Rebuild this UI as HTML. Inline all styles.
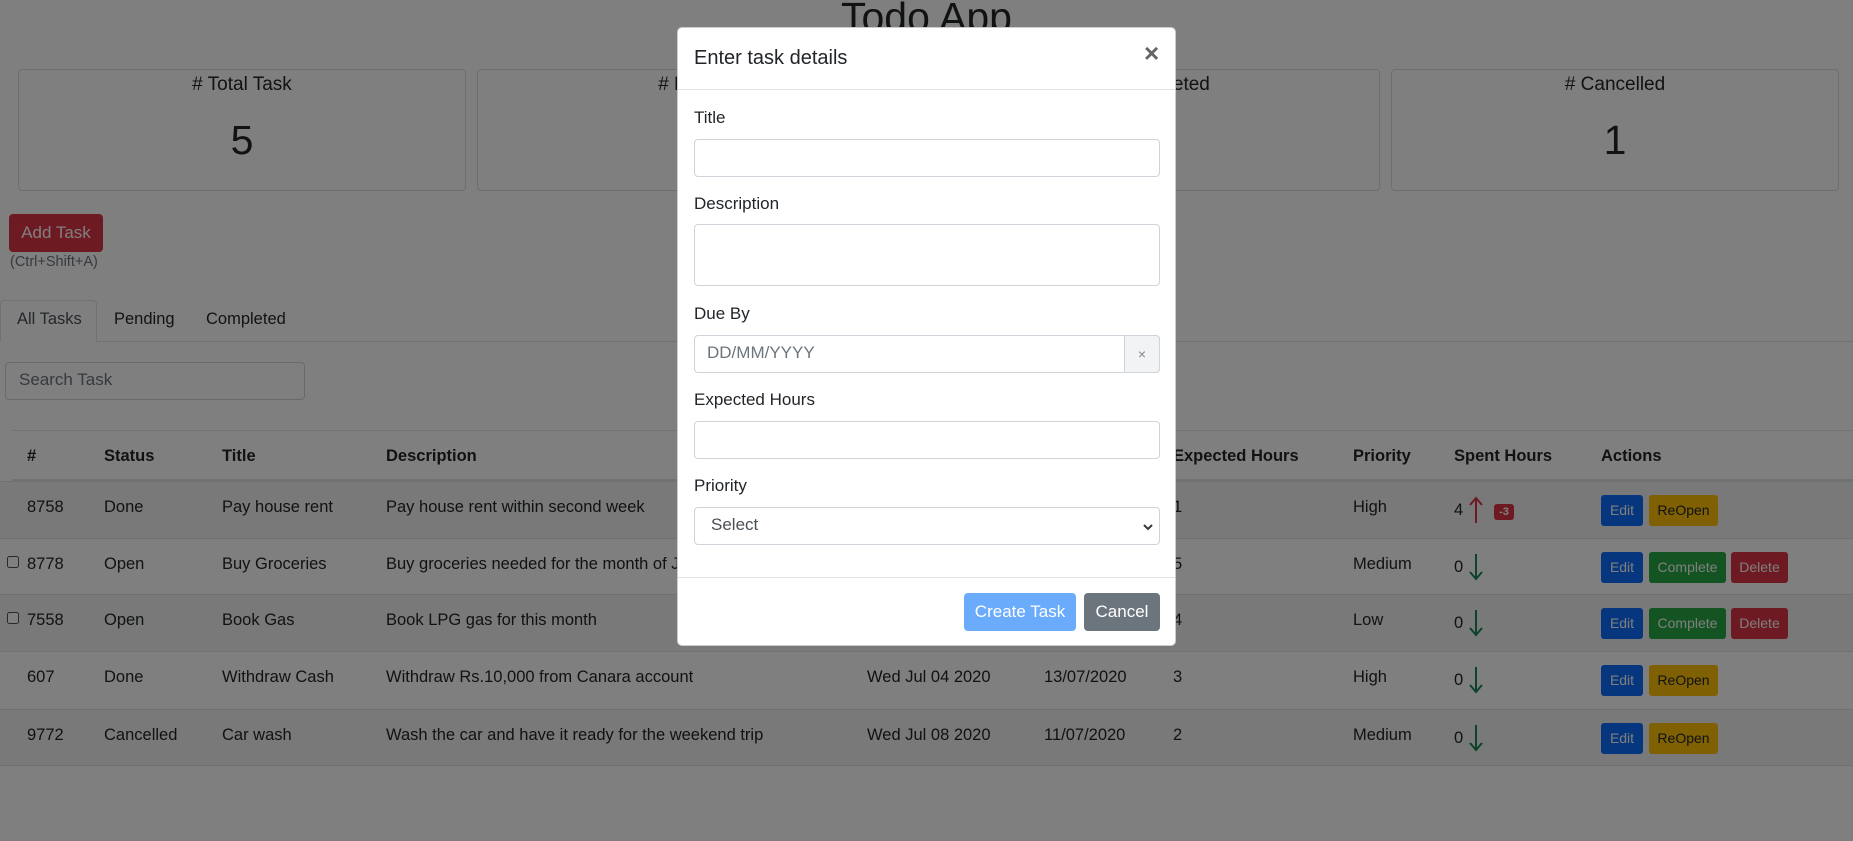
<!DOCTYPE html>
<html><head><meta charset="utf-8"><style>
*{box-sizing:border-box;margin:0;padding:0}
body{width:1853px;height:841px;overflow:hidden;background:#fff;font-family:"Liberation Sans",Arial,sans-serif;color:#212529;position:relative}
.a{position:absolute;white-space:nowrap}
.card{position:absolute;top:69px;height:122px;width:448px;border:1px solid #dcdcdc;border-radius:4px;text-align:center}
.card .h{position:absolute;top:1px;left:0;right:0;font-size:19px;line-height:28px}
.card .n{position:absolute;top:44px;left:0;right:0;font-size:41px;line-height:52px}
.row{position:absolute;left:0;width:1853px;height:57px;border-top:1px solid #dee2e6}
.row.s{background:#f2f2f2}
.c{position:absolute;top:14px;font-size:16.5px;line-height:22px}
.btn{position:absolute;top:13px;height:31px;border-radius:3px;font-size:14px;line-height:31px;text-align:center;color:#fff}
.e{background:#0d6efd;left:1601px;width:42px}
.r{background:#ffc107;color:#212529;left:1649px;width:69px}
.g{background:#28a745;left:1649px;width:77px}
.d{background:#dc3545;left:1731px;width:57px}
.ov{position:absolute;left:0;top:0;width:1853px;height:841px;background:rgba(0,0,0,.5)}
.modal{position:absolute;left:677px;top:27px;width:499px;height:619px;background:#fff;border-radius:5px;border:1px solid rgba(0,0,0,.2)}
.lbl{position:absolute;left:16px;font-size:17px;line-height:22px}
.inp{position:absolute;left:16px;width:466px;border:1px solid #ced4da;border-radius:4px;background:#fff}
</style></head><body>
<div class="a" style="left:0;width:1853px;text-align:center;top:-8px;font-size:41px;line-height:50px">Todo App</div>
<div class="card" style="left:18px"><div class="h"># Total Task</div><div class="n">5</div></div>
<div class="card" style="left:477px"><div class="h"># Pending</div><div class="n">3</div></div>
<div class="card" style="left:932px"><div class="h"># Completed</div><div class="n">1</div></div>
<div class="card" style="left:1391px"><div class="h"># Cancelled</div><div class="n">1</div></div>
<div class="a" style="left:9px;top:214px;width:94px;height:38px;background:#dc3545;color:#fff;border-radius:4px;font-size:17px;line-height:38px;text-align:center">Add Task</div>
<div class="a" style="left:10px;top:254px;font-size:14.5px;color:#6c757d">(Ctrl+Shift+A)</div>
<div class="a" style="left:0;top:341px;width:1853px;border-top:1px solid #dee2e6"></div>
<div class="a" style="left:0;top:300px;width:97px;height:42px;border:1px solid #dee2e6;border-bottom:1px solid #fff;border-radius:4px 4px 0 0;background:#fff"></div>
<div class="a" style="left:17px;top:310px;font-size:16.5px;color:#495057">All Tasks</div>
<div class="a" style="left:114px;top:310px;font-size:16.5px">Pending</div>
<div class="a" style="left:206px;top:310px;font-size:16.5px">Completed</div>
<div class="a" style="left:5px;top:362px;width:300px;height:38px;border:1px solid #ced4da;border-radius:4px"></div>
<div class="a" style="left:19px;top:370px;font-size:17px;color:#6c757d">Search Task</div>

<div class="row" style="top:430px;height:51px;left:12px;border-top:1px solid #dee2e6;border-bottom:2px solid #dee2e6;font-weight:bold">
<div class="c" style="top:14px;left:15px">#</div><div class="c" style="top:14px;left:92px">Status</div><div class="c" style="top:14px;left:210px">Title</div><div class="c" style="top:14px;left:374px">Description</div><div class="c" style="top:14px;left:1161px">Expected Hours</div><div class="c" style="top:14px;left:1341px">Priority</div><div class="c" style="top:14px;left:1442px">Spent Hours</div><div class="c" style="top:14px;left:1589px">Actions</div>
</div>

<div class="row s" style="top:481px"><div class="c" style="left:27px">8758</div><div class="c" style="left:104px">Done</div><div class="c" style="left:222px">Pay house rent</div><div class="c" style="left:386px">Pay house rent within second week</div><div class="c" style="left:867px">Sat Jul 04 2020</div><div class="c" style="left:1044px">05/07/2020</div><div class="c" style="left:1173px">1</div><div class="c" style="left:1353px">High</div>
<div class="c" style="left:1454px;top:17px">4</div><svg class="a" style="left:1469px;top:14px" width="14" height="28"><path d="M7 27V3M1 9L7 2L13 9" stroke="#dc3545" stroke-width="2" fill="none"/></svg><div class="a" style="left:1494px;top:22px;width:20px;height:16px;background:#dc3545;border-radius:3px;color:#fff;font-size:11px;line-height:16px;text-align:center;font-weight:bold">-3</div>
<div class="btn e">Edit</div><div class="btn r">ReOpen</div></div>

<div class="row" style="top:538px"><svg class="a" style="left:7px;top:17px" width="12" height="12"><rect x=".5" y=".5" width="11" height="11" rx="2" fill="#fff" stroke="#555"/></svg><div class="c" style="left:27px">8778</div><div class="c" style="left:104px">Open</div><div class="c" style="left:222px">Buy Groceries</div><div class="c" style="left:386px">Buy groceries needed for the month of July</div><div class="c" style="left:1173px">5</div><div class="c" style="left:1353px">Medium</div>
<div class="c" style="left:1454px;top:17px">0</div><svg class="a" style="left:1469px;top:14px" width="14" height="28"><path d="M7 1V25M1 19L7 26L13 19" stroke="#198754" stroke-width="2" fill="none"/></svg>
<div class="btn e">Edit</div><div class="btn g">Complete</div><div class="btn d">Delete</div></div>

<div class="row s" style="top:594px"><svg class="a" style="left:7px;top:17px" width="12" height="12"><rect x=".5" y=".5" width="11" height="11" rx="2" fill="#fff" stroke="#555"/></svg><div class="c" style="left:27px">7558</div><div class="c" style="left:104px">Open</div><div class="c" style="left:222px">Book Gas</div><div class="c" style="left:386px">Book LPG gas for this month</div><div class="c" style="left:1173px">4</div><div class="c" style="left:1353px">Low</div>
<div class="c" style="left:1454px;top:17px">0</div><svg class="a" style="left:1469px;top:14px" width="14" height="28"><path d="M7 1V25M1 19L7 26L13 19" stroke="#198754" stroke-width="2" fill="none"/></svg>
<div class="btn e">Edit</div><div class="btn g">Complete</div><div class="btn d">Delete</div></div>

<div class="row" style="top:651px"><div class="c" style="left:27px">607</div><div class="c" style="left:104px">Done</div><div class="c" style="left:222px">Withdraw Cash</div><div class="c" style="left:386px">Withdraw Rs.10,000 from Canara account</div><div class="c" style="left:867px">Wed Jul 04 2020</div><div class="c" style="left:1044px">13/07/2020</div><div class="c" style="left:1173px">3</div><div class="c" style="left:1353px">High</div>
<div class="c" style="left:1454px;top:17px">0</div><svg class="a" style="left:1469px;top:14px" width="14" height="28"><path d="M7 1V25M1 19L7 26L13 19" stroke="#198754" stroke-width="2" fill="none"/></svg>
<div class="btn e">Edit</div><div class="btn r">ReOpen</div></div>

<div class="row s" style="top:709px;border-bottom:1px solid #dee2e6"><div class="c" style="left:27px">9772</div><div class="c" style="left:104px">Cancelled</div><div class="c" style="left:222px">Car wash</div><div class="c" style="left:386px">Wash the car and have it ready for the weekend trip</div><div class="c" style="left:867px">Wed Jul 08 2020</div><div class="c" style="left:1044px">11/07/2020</div><div class="c" style="left:1173px">2</div><div class="c" style="left:1353px">Medium</div>
<div class="c" style="left:1454px;top:17px">0</div><svg class="a" style="left:1469px;top:14px" width="14" height="28"><path d="M7 1V25M1 19L7 26L13 19" stroke="#198754" stroke-width="2" fill="none"/></svg>
<div class="btn e">Edit</div><div class="btn r">ReOpen</div></div>

<div class="ov"></div>
<div class="modal">
<div class="a" style="left:16px;top:16px;font-size:20px;line-height:28px">Enter task details</div>
<div class="a" style="left:466px;top:10px;font-size:26px;font-weight:bold;color:#666">×</div>
<div class="a" style="left:0;top:61px;width:497px;border-top:1px solid #dee2e6"></div>
<div class="lbl" style="top:79px">Title</div>
<div class="inp" style="top:111px;height:38px"></div>
<div class="lbl" style="top:165px">Description</div>
<div class="inp" style="top:196px;height:62px"></div>
<div class="lbl" style="top:275px">Due By</div>
<div class="inp" style="top:307px;height:38px"></div>
<div class="a" style="left:446px;top:307px;width:36px;height:38px;background:#f1f3f5;border:1px solid #ced4da;border-radius:0 4px 4px 0;text-align:center;color:#888;font-size:14px;line-height:36px">×</div>
<div class="a" style="left:29px;top:315px;font-size:17px;color:#6c757d">DD/MM/YYYY</div>
<div class="lbl" style="top:361px">Expected Hours</div>
<div class="inp" style="top:393px;height:38px"></div>
<div class="lbl" style="top:447px">Priority</div>
<div class="inp" style="top:479px;height:38px"></div>
<div class="a" style="left:33px;top:487px;font-size:17px;color:#495057">Select</div>
<svg class="a" style="left:464px;top:494px" width="12" height="10"><path d="M2 3L6 7L10 3" stroke="#343a40" stroke-width="2" fill="none"/></svg>
<div class="a" style="left:0;top:549px;width:497px;border-top:1px solid #dee2e6"></div>
<div class="a" style="left:286px;top:565px;width:112px;height:38px;background:#6aabfb;border-radius:4px;color:#fff;font-size:17px;line-height:38px;text-align:center">Create Task</div>
<div class="a" style="left:406px;top:565px;width:76px;height:38px;background:#6c757d;border-radius:4px;color:#fff;font-size:17px;line-height:38px;text-align:center">Cancel</div>
</div>
</body></html>
